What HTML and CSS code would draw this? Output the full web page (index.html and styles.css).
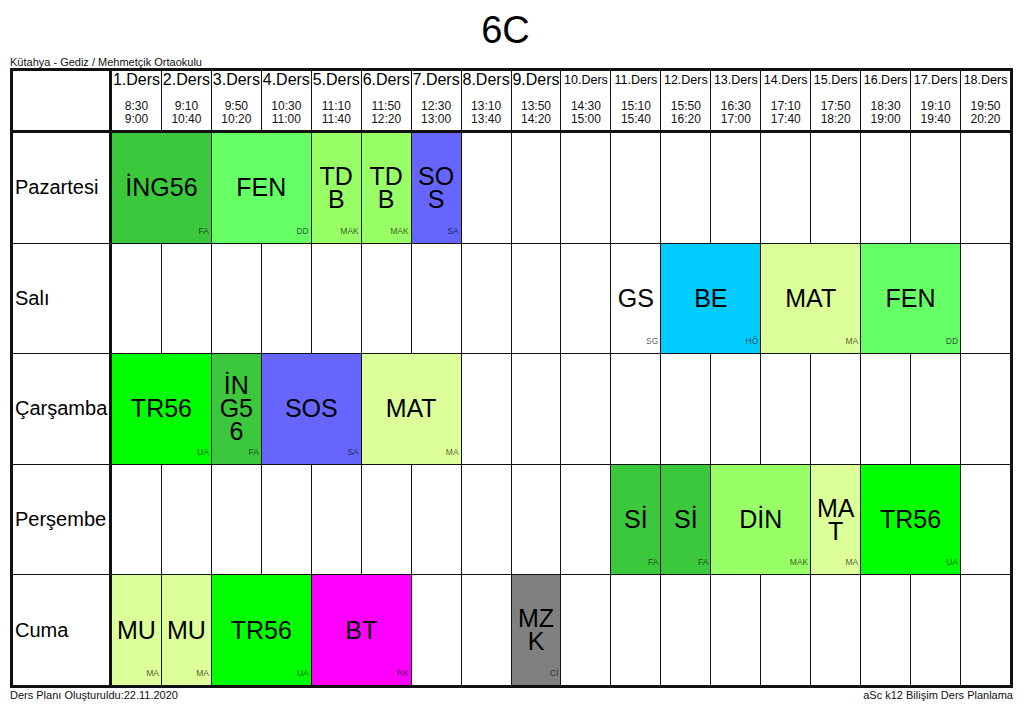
FILE: index.html
```html
<!DOCTYPE html>
<html lang="tr">
<head>
<meta charset="utf-8">
<title>6C</title>
<link rel="stylesheet" href="styles.css">
</head>
<body>
<div class="page">
  <h1 class="title">6C</h1>
  <div class="school">Kütahya - Gediz / Mehmetçik Ortaokulu</div>
  <div class="grid">
    <div class="corner"></div>
    <div class="hcell"><span class="hname">1.Ders</span><span class="htime">8:30<br>9:00</span></div>
    <div class="hcell"><span class="hname">2.Ders</span><span class="htime">9:10<br>10:40</span></div>
    <div class="hcell"><span class="hname">3.Ders</span><span class="htime">9:50<br>10:20</span></div>
    <div class="hcell"><span class="hname">4.Ders</span><span class="htime">10:30<br>11:00</span></div>
    <div class="hcell"><span class="hname">5.Ders</span><span class="htime">11:10<br>11:40</span></div>
    <div class="hcell"><span class="hname">6.Ders</span><span class="htime">11:50<br>12:20</span></div>
    <div class="hcell"><span class="hname">7.Ders</span><span class="htime">12:30<br>13:00</span></div>
    <div class="hcell"><span class="hname">8.Ders</span><span class="htime">13:10<br>13:40</span></div>
    <div class="hcell"><span class="hname">9.Ders</span><span class="htime">13:50<br>14:20</span></div>
    <div class="hcell"><span class="hname small">10.Ders</span><span class="htime">14:30<br>15:00</span></div>
    <div class="hcell"><span class="hname small">11.Ders</span><span class="htime">15:10<br>15:40</span></div>
    <div class="hcell"><span class="hname small">12.Ders</span><span class="htime">15:50<br>16:20</span></div>
    <div class="hcell"><span class="hname small">13.Ders</span><span class="htime">16:30<br>17:00</span></div>
    <div class="hcell"><span class="hname small">14.Ders</span><span class="htime">17:10<br>17:40</span></div>
    <div class="hcell"><span class="hname small">15.Ders</span><span class="htime">17:50<br>18:20</span></div>
    <div class="hcell"><span class="hname small">16.Ders</span><span class="htime">18:30<br>19:00</span></div>
    <div class="hcell"><span class="hname small">17.Ders</span><span class="htime">19:10<br>19:40</span></div>
    <div class="hcell"><span class="hname small">18.Ders</span><span class="htime">19:50<br>20:20</span></div>

    <!-- Pazartesi -->
    <div class="day">Pazartesi</div>
    <div class="cell c2 ing">İNG56<span class="code">FA</span></div>
    <div class="cell c2 fen">FEN<span class="code">DD</span></div>
    <div class="cell tdb">TDB<span class="code">MAK</span></div>
    <div class="cell tdb">TDB<span class="code">MAK</span></div>
    <div class="cell sos">SOS<span class="code">SA</span></div>
    <div class="cell"></div><div class="cell"></div><div class="cell"></div><div class="cell"></div>
    <div class="cell"></div><div class="cell"></div><div class="cell"></div><div class="cell"></div>
    <div class="cell"></div><div class="cell"></div><div class="cell"></div>

    <!-- Salı -->
    <div class="day">Salı</div>
    <div class="cell"></div><div class="cell"></div><div class="cell"></div><div class="cell"></div><div class="cell"></div>
    <div class="cell"></div><div class="cell"></div><div class="cell"></div><div class="cell"></div><div class="cell"></div>
    <div class="cell">GS<span class="code">SG</span></div>
    <div class="cell c2 be">BE<span class="code">HÖ</span></div>
    <div class="cell c2 mat">MAT<span class="code">MA</span></div>
    <div class="cell c2 fen">FEN<span class="code">DD</span></div>
    <div class="cell"></div>

    <!-- Çarşamba -->
    <div class="day">Çarşamba</div>
    <div class="cell c2 tr">TR56<span class="code">UA</span></div>
    <div class="cell ing">İNG56<span class="code">FA</span></div>
    <div class="cell c2 sos">SOS<span class="code">SA</span></div>
    <div class="cell c2 mat">MAT<span class="code">MA</span></div>
    <div class="cell"></div><div class="cell"></div><div class="cell"></div><div class="cell"></div>
    <div class="cell"></div><div class="cell"></div><div class="cell"></div><div class="cell"></div>
    <div class="cell"></div><div class="cell"></div><div class="cell"></div>

    <!-- Perşembe -->
    <div class="day">Perşembe</div>
    <div class="cell"></div><div class="cell"></div><div class="cell"></div><div class="cell"></div><div class="cell"></div>
    <div class="cell"></div><div class="cell"></div><div class="cell"></div><div class="cell"></div><div class="cell"></div>
    <div class="cell ing">Sİ<span class="code">FA</span></div>
    <div class="cell ing">Sİ<span class="code">FA</span></div>
    <div class="cell c2 tdb">DİN<span class="code">MAK</span></div>
    <div class="cell mat">MAT<span class="code">MA</span></div>
    <div class="cell c2 tr">TR56<span class="code">UA</span></div>
    <div class="cell"></div>

    <!-- Cuma -->
    <div class="day">Cuma</div>
    <div class="cell mat">MU<span class="code">MA</span></div>
    <div class="cell mat">MU<span class="code">MA</span></div>
    <div class="cell c2 tr">TR56<span class="code">UA</span></div>
    <div class="cell c2 bt">BT<span class="code">RK</span></div>
    <div class="cell"></div><div class="cell"></div>
    <div class="cell mzk">MZK<span class="code">Cİ</span></div>
    <div class="cell"></div><div class="cell"></div><div class="cell"></div>
    <div class="cell"></div><div class="cell"></div><div class="cell"></div>
    <div class="cell"></div><div class="cell"></div><div class="cell"></div>
  </div>
  <div class="foot">
    <span>Ders Planı Oluşturuldu:22.11.2020</span>
    <span>aSc k12 Bilişim Ders Planlama</span>
  </div>
</div>
</body>
</html>
```

FILE: styles.css
```css
body {
  margin: 0;
  background: #fff;
  color: #000;
  font-family: "Liberation Sans", Arial, sans-serif;
}

.page {
  width: 1003px;
  padding: 8px 0 0 10px;
}

.title {
  margin: 0;
  padding-right: 12px;
  font-size: 38px;
  line-height: 44px;
  font-weight: normal;
  text-align: center;
}

.school {
  margin-top: 4px;
  font-size: 11px;
  line-height: 12px;
  color: #111;
}

.grid {
  display: grid;
  box-sizing: border-box;
  width: 1003px;
  height: 620px;
  padding: 3px;
  gap: 1px;
  background: #111;
  grid-template-columns: 98px repeat(18, minmax(0, 1fr));
  grid-template-rows: 61px repeat(5, minmax(0, 1fr));
}

.corner,
.hcell {
  background: #fff;
  margin-bottom: 2px;
}

.corner,
.day {
  margin-right: 2px;
}

.hcell {
  display: flex;
  flex-direction: column;
  align-items: center;
  min-width: 0;
}

.hname {
  font-size: 16px;
  line-height: 18px;
  white-space: nowrap;
}

.hname.small {
  font-size: 12.5px;
}

.htime {
  margin-top: 11px;
  font-size: 12px;
  line-height: 13px;
  text-align: center;
  color: #111;
}

.day {
  display: flex;
  align-items: center;
  padding-left: 2px;
  background: #fff;
  font-size: 20px;
}

.cell {
  position: relative;
  display: flex;
  align-items: center;
  justify-content: center;
  min-width: 0;
  padding: 0 3px;
  background: #fff;
  color: #000;
  font-size: 25px;
  line-height: 23px;
  text-align: center;
  word-break: break-all;
}

.c2 {
  grid-column: span 2;
}

.code {
  position: absolute;
  right: 2px;
  bottom: 7px;
  font-size: 8.5px;
  line-height: 9px;
  color: rgba(0, 0, 0, 0.68);
  word-break: normal;
}

.ing { background: #3cc83c; }
.fen { background: #66ff66; }
.tdb { background: #99ff66; }
.sos { background: #6666ff; }
.be  { background: #00ccff; }
.mat { background: #ddff99; }
.tr  { background: #00ff00; }
.bt  { background: #ff00ff; }
.mzk { background: #808080; }

.foot {
  display: flex;
  justify-content: space-between;
  padding-top: 1px;
  font-size: 11px;
  line-height: 12px;
  color: #111;
}
```
